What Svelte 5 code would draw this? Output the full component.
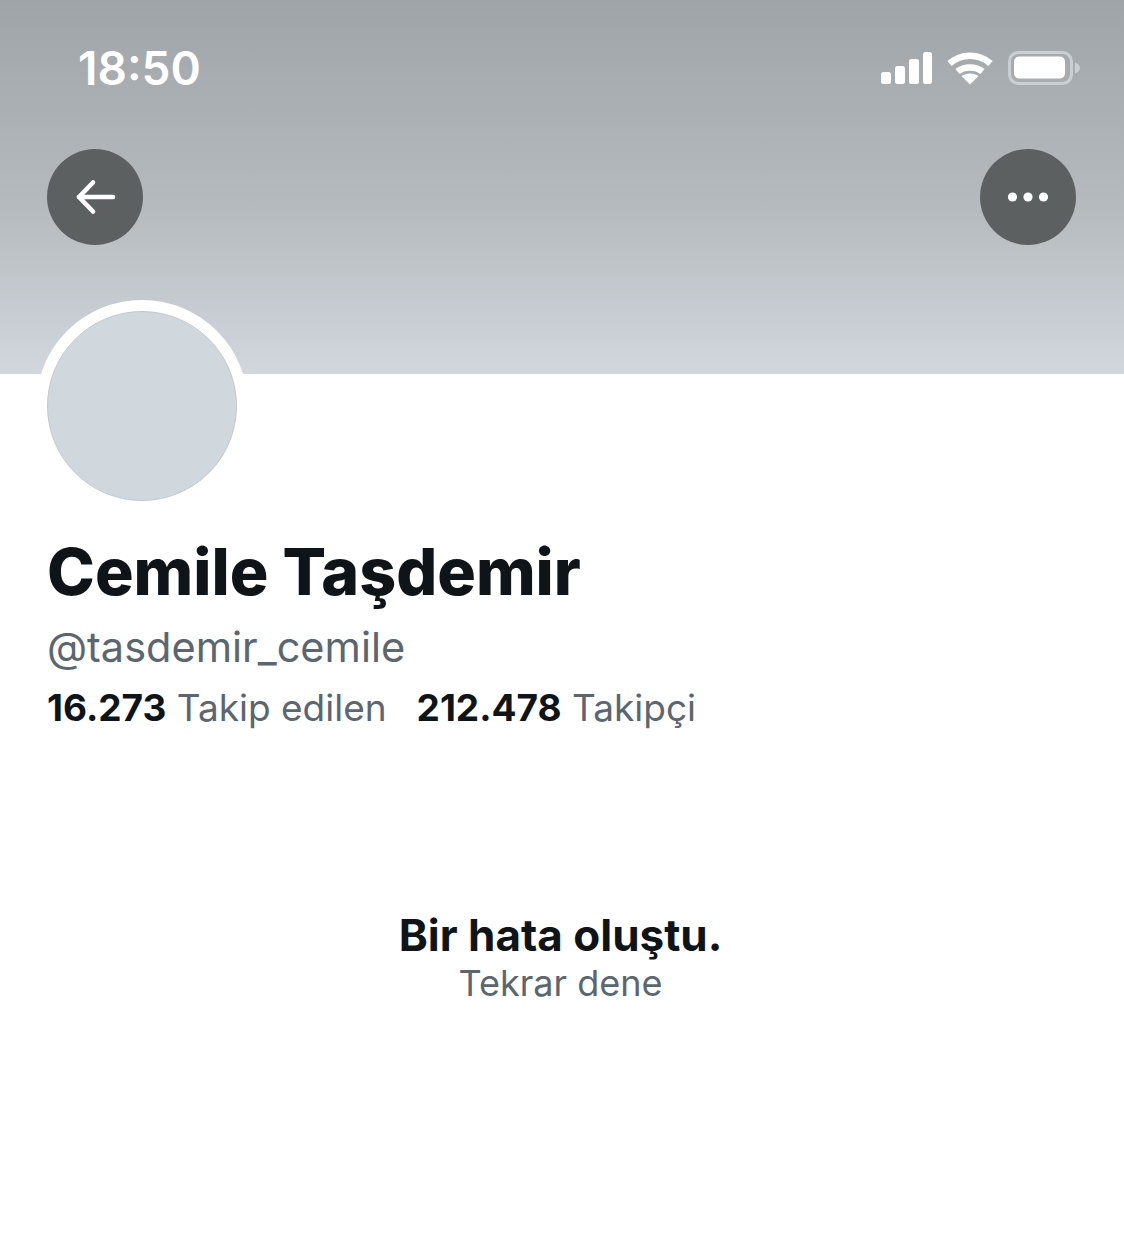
<script lang="ts">
	const stats = [
		{ value: '16.273', label: 'Takip edilen' },
		{ value: '212.478', label: 'Takipçi' },
	]
</script>

<div class="screen">
	<header class="banner">
		<div class="status">
			<span class="time">18:50</span>
			<div class="indicators">
				<svg width="52" height="34" viewBox="0 0 52 34" fill="#fff">
					<rect x="0" y="21" width="10" height="12" rx="2.5" />
					<rect x="14" y="15" width="10" height="18" rx="2.5" />
					<rect x="28" y="8" width="10" height="25" rx="2.5" />
					<rect x="42" y="1" width="9" height="32" rx="2.5" />
				</svg>
				<svg width="46" height="34" viewBox="0 0 46 34" fill="none" stroke="#fff" stroke-width="6.5">
					<path d="M2.5 12.5C14 2 32 2 43.5 12.5" />
					<path d="M10.5 20.5C17 15 29 15 35.5 20.5" />
					<path d="M23 33.5L14.5 25C19 21.5 27 21.5 31.5 25Z" fill="#fff" stroke="none" />
				</svg>
				<svg class="battery" width="73" height="36" viewBox="0 0 73 36" fill="none">
					<rect x="1.5" y="2.5" width="62" height="31" rx="9" stroke="#c9cfd3" stroke-width="3" />
					<rect x="6" y="6.5" width="51" height="22" rx="5" fill="#fff" />
					<path d="M67 12.5C70 13.5 72 15.5 72 18C72 20.5 70 22.5 67 23.5Z" fill="#c9cfd3" />
				</svg>
			</div>
		</div>
		<div class="nav">
			<button class="round" aria-label="Geri">
				<svg width="42" height="42" viewBox="0 0 42 42" fill="none" stroke="#fff" stroke-width="4.6" stroke-linecap="round" stroke-linejoin="round">
					<path d="M39 21H5" />
					<path d="M19 6.5L5 21L19 35.5" />
				</svg>
			</button>
			<button class="round" aria-label="Daha fazla">
				<svg width="44" height="12" viewBox="0 0 44 12" fill="#fff">
					<circle cx="6.5" cy="6" r="4.6" />
					<circle cx="22" cy="6" r="4.6" />
					<circle cx="37.5" cy="6" r="4.6" />
				</svg>
			</button>
		</div>
	</header>

	<main class="profile">
		<div class="avatar-ring"><div class="avatar"></div></div>
		<h1 class="name">Cemile Taşdemir</h1>
		<p class="handle">@tasdemir_cemile</p>
		<div class="stats">
			{#each stats as stat}
				<span class="stat"><b>{stat.value}</b> {stat.label}</span>
			{/each}
		</div>
		<div class="error">
			<strong>Bir hata oluştu.</strong>
			<span>Tekrar dene</span>
		</div>
	</main>
</div>

<style>
	:global(body) {
		margin: 0;
		background: #fff;
	}
	.screen {
		width: 1124px;
		height: 1244px;
		overflow: hidden;
		font-family: Inter, 'Liberation Sans', sans-serif;
		color: #0f1419;
	}
	.banner {
		height: 374px;
		box-sizing: border-box;
		padding: 44px 48px 0 47px;
		background: linear-gradient(#9fa4a8, #b4babd 55%, #d1d7dd);
	}
	.status {
		display: flex;
		align-items: center;
		justify-content: space-between;
		height: 48px;
		padding: 0 0 0 31px;
	}
	.time {
		font-size: 46px;
		font-weight: 600;
		color: #fff;
	}
	.indicators {
		display: flex;
		align-items: center;
		gap: 14px;
		margin-right: -5px;
	}
	.battery {
		margin-left: 1px;
	}
	.nav {
		display: flex;
		justify-content: space-between;
		margin-top: 57px;
	}
	.round {
		display: flex;
		align-items: center;
		justify-content: center;
		width: 96px;
		height: 96px;
		padding: 0;
		border: none;
		border-radius: 50%;
		background: #5d6061;
	}
	.profile {
		padding: 0 47px;
	}
	.avatar-ring {
		box-sizing: border-box;
		width: 212px;
		height: 212px;
		margin: -74px 0 0 -11px;
		padding: 11px;
		border-radius: 50%;
		background: #fff;
		position: relative;
	}
	.avatar {
		box-sizing: border-box;
		width: 190px;
		height: 190px;
		border: 1px solid #c3c9ce;
		border-radius: 50%;
		background: #d0d7dd;
	}
	.name {
		margin: 24px 0 0;
		font-size: 64.4px;
		line-height: 72px;
		font-weight: 800;
	}
	.handle {
		margin: 16px 0 0;
		font-size: 41.5px;
		line-height: 46px;
		color: #5b6670;
	}
	.stats {
		display: flex;
		gap: 30px;
		margin-top: 15px;
		font-size: 37px;
		line-height: 46px;
		color: #5b6670;
	}
	.stat b {
		font-weight: 700;
		color: #0f1419;
	}
	.error {
		display: flex;
		flex-direction: column;
		align-items: center;
		margin: 180px 0 0;
		padding-right: 3px;
	}
	.error strong {
		font-size: 44px;
		line-height: 48px;
		font-weight: 700;
	}
	.error span {
		font-size: 36px;
		line-height: 48px;
		color: #5b6670;
	}
</style>
